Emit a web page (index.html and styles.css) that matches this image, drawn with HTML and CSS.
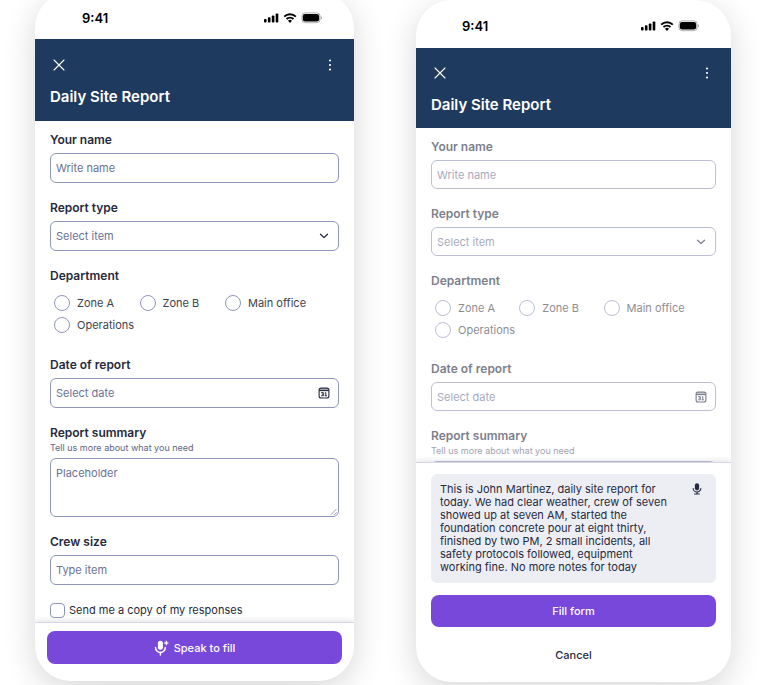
FILE: index.html
```html
<!DOCTYPE html>
<html lang="en">
<head>
<meta charset="utf-8">
<meta name="viewport" content="width=device-width, initial-scale=1">
<title>Daily Site Report</title>
<link rel="stylesheet" href="styles.css">
</head>
<body>
<svg class="defs" aria-hidden="true">
  <symbol id="status" viewBox="0 0 58 12">
    <g fill="#000">
      <rect x="0" y="7" width="2.6" height="3.500" rx=".8"/>
      <rect x="3.900" y="5.200" width="2.600" height="5.300" rx=".8"/>
      <rect x="7.800" y="3.400" width="2.600" height="7.100" rx=".8"/>
      <rect x="11.700" y="1.400" width="2.600" height="9.100" rx=".8"/>
      <rect x="38.800" y="2" width="16.400" height="7.600" rx="2.400"/>
    </g>
    <g fill="none" stroke="#000" stroke-width="2">
      <path d="M20.200 4.600a8.400 8.400 0 0 1 11.600 0"/>
      <path d="M22.500 7.100a5.100 5.100 0 0 1 7 0"/>
    </g>
    <path d="M26 11l-2-2.200a2.800 2.800 0 0 1 4 0z"/>
    <rect x="37.900" y=".9" width="18.200" height="9.800" rx="3.200" fill="none" stroke="#000" stroke-opacity=".35" stroke-width=".9"/>
    <path d="M57 4.200c1.300.5 1.300 2.700 0 3.200z" fill-opacity=".4"/>
  </symbol>
  <symbol id="close" viewBox="0 0 12 12"><path d="M1 1l10 10M11 1L1 11" fill="none" stroke="#fff" stroke-width="1.100" stroke-linecap="round"/></symbol>
  <symbol id="more" viewBox="0 0 4 12"><g fill="#fff"><circle cx="2" cy="1.500" r="1.100"/><circle cx="2" cy="6" r="1.100"/><circle cx="2" cy="10.500" r="1.100"/></g></symbol>
  <symbol id="chevron" viewBox="0 0 12 12"><path d="M2.500 4.300L6 7.600l3.500-3.300" fill="none" stroke="#262a40" stroke-width="1.300" stroke-linecap="round" stroke-linejoin="round"/></symbol>
  <symbol id="calendar" viewBox="0 0 12 12">
    <rect x="1.100" y="1.100" width="9.800" height="9.900" rx="2" fill="none" stroke="#262a40" stroke-width="1.100"/>
    <path d="M1.200 3.600h9.600" stroke="#262a40" stroke-width="1.100"/>
    <path d="M1.600 2.400h8.800" stroke="#262a40" stroke-opacity=".45" stroke-width="1.400"/>
    <path d="M3.200 5.600h2.100v3.200H3.200M3.800 7.200h1.500M6.800 6.100l1-.5v3.200M6.700 8.800h2.200" fill="none" stroke="#262a40" stroke-width="1"/>
  </symbol>
  <symbol id="resize" viewBox="0 0 8 8"><path d="M1 6.500L6.500 1M4.300 6.800l2.500-2.500" stroke="#8288ab" stroke-width=".8"/></symbol>
  <symbol id="mic-plus" viewBox="0 0 15 16">
    <rect x="3.900" y=".8" width="5" height="9" rx="2.500" fill="#fff"/>
    <path d="M1.500 7.500a4.900 4.900 0 0 0 9.800 0M6.400 12.300V15" fill="none" stroke="#fff" stroke-width="1.500" stroke-linecap="round"/>
    <path d="M12.300 .6l.8 1.600 1.600.8-1.600.8-.8 1.600-.8-1.600-1.600-.8 1.600-.8z" fill="#fff" stroke="#fff" stroke-width=".3"/>
  </symbol>
  <symbol id="mic" viewBox="0 0 10 12">
    <rect x="2.900" y=".2" width="4.200" height="7.200" rx="2.100" fill="#262a40"/>
    <path d="M1.200 5.200a3.800 3.800 0 0 0 7.600 0M5 9v1.800M2.200 11h5.600" fill="none" stroke="#262a40" stroke-width="1.200"/>
  </symbol>
</svg>

<main class="board">
  <section class="phone phone-form">
    <div class="status"><span>9:41</span><svg class="status-icons" aria-hidden="true"><use href="#status"/></svg></div>
    <header class="header">
      <div class="header-bar">
        <button type="button" class="icon-button" aria-label="Close"><svg class="close-icon"><use href="#close"/></svg></button>
        <button type="button" class="icon-button" aria-label="More"><svg class="more-icon"><use href="#more"/></svg></button>
      </div>
      <h1>Daily Site Report</h1>
    </header>
    <form class="form">
      <div class="field"><label for="name">Your name</label><input class="control" id="name" type="text" placeholder="Write name"></div>
      <div class="field"><label for="type">Report type</label>
        <div class="control-wrap"><select class="control" id="type"><option>Select item</option></select><svg class="control-icon" aria-hidden="true"><use href="#chevron"/></svg></div>
      </div>
      <fieldset class="field">
        <legend>Department</legend>
        <div class="radios">
          <label><input type="radio" name="dept">Zone A</label>
          <label><input type="radio" name="dept">Zone B</label>
          <label><input type="radio" name="dept">Main office</label>
          <label><input type="radio" name="dept">Operations</label>
        </div>
      </fieldset>
      <div class="field"><label for="date">Date of report</label>
        <div class="control-wrap"><input class="control" id="date" type="text" placeholder="Select date"><svg class="control-icon" aria-hidden="true"><use href="#calendar"/></svg></div>
      </div>
      <div class="field"><label for="summary">Report summary</label><p class="hint">Tell us more about what you need</p>
        <div class="control-wrap"><textarea class="control" id="summary" placeholder="Placeholder"></textarea><svg class="resize-icon" aria-hidden="true"><use href="#resize"/></svg></div>
      </div>
      <div class="field"><label for="crew">Crew size</label><input class="control" id="crew" type="text" placeholder="Type item"></div>
      <label class="check"><input type="checkbox">Send me a copy of my responses</label>
    </form>
    <footer class="footer">
      <button type="button" class="primary"><svg class="mic-plus-icon" aria-hidden="true"><use href="#mic-plus"/></svg>Speak to fill</button>
    </footer>
  </section>

  <section class="phone phone-voice">
    <div class="status"><span>9:41</span><svg class="status-icons" aria-hidden="true"><use href="#status"/></svg></div>
    <header class="header">
      <div class="header-bar">
        <button type="button" class="icon-button" aria-label="Close"><svg class="close-icon"><use href="#close"/></svg></button>
        <button type="button" class="icon-button" aria-label="More"><svg class="more-icon"><use href="#more"/></svg></button>
      </div>
      <h1>Daily Site Report</h1>
    </header>
    <form class="form form-dimmed">
      <div class="field"><label for="name2">Your name</label><input class="control" id="name2" type="text" placeholder="Write name"></div>
      <div class="field"><label for="type2">Report type</label>
        <div class="control-wrap"><select class="control" id="type2"><option>Select item</option></select><svg class="control-icon" aria-hidden="true"><use href="#chevron"/></svg></div>
      </div>
      <fieldset class="field">
        <legend>Department</legend>
        <div class="radios">
          <label><input type="radio" name="dept2">Zone A</label>
          <label><input type="radio" name="dept2">Zone B</label>
          <label><input type="radio" name="dept2">Main office</label>
          <label><input type="radio" name="dept2">Operations</label>
        </div>
      </fieldset>
      <div class="field"><label for="date2">Date of report</label>
        <div class="control-wrap"><input class="control" id="date2" type="text" placeholder="Select date"><svg class="control-icon" aria-hidden="true"><use href="#calendar"/></svg></div>
      </div>
      <div class="field"><label for="summary2">Report summary</label><p class="hint">Tell us more about what you need</p>
        <textarea class="control" id="summary2"></textarea>
      </div>
    </form>
    <div class="sheet">
      <div class="transcript">
        <p>This is John Martinez, daily site report for today. We had clear weather, crew of seven showed up at seven AM, started the foundation concrete pour at eight thirty, finished by two PM, 2 small incidents, all safety protocols followed, equipment working fine. No more notes for today</p>
        <svg class="mic-icon" aria-hidden="true"><use href="#mic"/></svg>
      </div>
      <button type="button" class="primary">Fill form</button>
      <button type="button" class="plain">Cancel</button>
    </div>
  </section>
</main>
</body>
</html>
```
FILE: styles.css
```css
* { box-sizing: border-box; }
body {
  margin: 0;
  background: #fff;
  color: #262a40;
  font-family: Inter, "Liberation Sans", sans-serif;
  font-size: 11px;
  overflow: hidden;
}
button, input, select, textarea { font: inherit; color: inherit; margin: 0; }
p, h1 { margin: 0; }
.defs { position: absolute; width: 0; height: 0; }
.board {
  display: grid;
  grid-template-columns: 319fr 315fr;
  gap: 62px;
  align-items: start;
  padding: 0 38px 16px 35px;
}
.phone {
  --control: 30px;
  background: #fff;
  border-radius: 36px;
  overflow: hidden;
  box-shadow: 0 8px 32px rgba(0, 0, 0, .16);
}
.phone-form { margin-top: -8px; }
.phone-voice { --control: 29px; }

.status {
  display: flex;
  justify-content: space-between;
  align-items: center;
  height: 47px;
  padding: 5px 32px 0 47px;
  color: #000;
  font-size: 13px;
  font-weight: 600;
}
.status-icons { width: 58px; height: 12px; }
.phone-voice .status { height: 48px; padding: 4px 32px 0 46px; }

.header {
  height: 82px;
  padding: 18px 16px 0 15px;
  background: #1f3a5f;
  color: #fff;
}
.phone-voice .header { height: 80px; padding-top: 17px; }
.header-bar { display: flex; justify-content: space-between; }
.header h1 { margin-top: 14px; font-size: 15px; line-height: 20px; font-weight: 600; }
.icon-button {
  display: flex;
  align-items: center;
  justify-content: center;
  width: 17px;
  height: 16px;
  padding: 0;
  border: 0;
  background: none;
}
.close-icon { width: 12px; height: 12px; }
.more-icon { width: 4px; height: 12px; }

.form { padding: 11px 15px 4px; }
.form-dimmed > * { opacity: .6; }
.field { margin: 0 0 17px; padding: 0; border: 0; min-width: 0; }
.field > label, .field > legend {
  display: block;
  margin-bottom: 5px;
  padding: 0;
  font-size: 12px;
  line-height: 16px;
  font-weight: 600;
}
.field > label:has(+ .hint) { margin-bottom: 0; }
.hint { margin-bottom: 3px; font-size: 9px; line-height: 14px; color: #5f6480; }
.control {
  display: block;
  width: 100%;
  height: var(--control);
  padding: 0 5px;
  border: 1px solid #9096bb;
  border-radius: 6px;
  background: #fff;
  color: #6b7196;
  appearance: none;
  outline: 0;
}
.control::placeholder { color: #6b7196; opacity: 1; }
textarea.control { height: 59px; padding: 7px 5px; line-height: 14px; resize: none; }
.control-wrap { position: relative; }
.control-icon {
  position: absolute;
  right: 9px;
  top: 9px;
  width: 12px;
  height: 12px;
  pointer-events: none;
}
.resize-icon { position: absolute; right: 1px; bottom: 1px; width: 8px; height: 8px; }

.radios {
  display: grid;
  grid-template-columns: 30% 30% 40%;
  padding: 3px 0 4px 4px;
  color: #41424c;
}
.phone-voice .radios { padding-bottom: 3px; }
.radios label { display: flex; align-items: center; gap: 7px; height: 22px; }
.radios input, .check input {
  appearance: none;
  width: 16px;
  height: 16px;
  border: 1px solid #9096bb;
  background: #fff;
}
.radios input { border-radius: 50%; }
.check { display: flex; align-items: center; gap: 4px; height: 16px; }
.check input { width: 15px; height: 15px; border-radius: 4px; }

.footer, .sheet {
  position: relative;
  background: #fff;
  border-top: 1px solid #d5d5e6;
  box-shadow: 0 -2px 5px rgba(30, 30, 60, .1);
}
.footer { padding: 8px 12px 17px; }
.primary, .plain {
  display: flex;
  align-items: center;
  justify-content: center;
  gap: 5px;
  width: 100%;
  height: 33px;
  padding: 0;
  border: 0;
  border-radius: 8px;
  font-weight: 500;
}
.sheet .primary, .sheet .plain { height: 32px; }
.primary { background: #7848da; color: #fff; }
.plain { background: none; }
.mic-plus-icon { width: 15px; height: 16px; }

.sheet {
  display: flex;
  flex-direction: column;
  gap: 12px;
  margin-top: -79px;
  padding: 11px 15px;
}
.transcript {
  display: flex;
  justify-content: space-between;
  padding: 9px 14px 9px 9px;
  border-radius: 6px;
  background: #edeef4;
}
.transcript p { flex: 0 1 229px; line-height: 13px; }
.mic-icon { flex: none; width: 10px; height: 12px; }
```
